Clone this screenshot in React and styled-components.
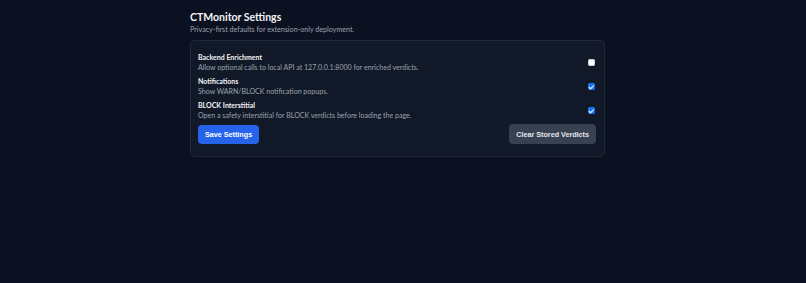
import React from "react";
import styled, { createGlobalStyle } from "styled-components";

const Global = createGlobalStyle`
  html, body { margin: 0; padding: 0; background: #0b1120; }
  body { font-family: Lato, "Open Sans", sans-serif; color: #e5e7eb; }
  * { box-sizing: border-box; }
`;

const Page = styled.div`
  min-height: 283px;
  background: #0b1120;
  padding: 10px 11px 0 0;
  display: flex;
  justify-content: center;
`;

const Wrap = styled.div`
  width: 415px;
`;

const Title = styled.h1`
  margin: 0;
  font-size: 10.5px;
  font-weight: 700;
  line-height: 14px;
  color: #f3f4f6;
`;

const Subtitle = styled.p`
  margin: 1px 0 0;
  font-size: 7.15px;
  line-height: 10px;
  color: #9ca3af;
`;

const Card = styled.div`
  margin-top: 5px;
  background: #111827;
  border: 1px solid #1f2937;
  border-radius: 5px;
  padding: 12px 8px 12px 7px;
  display: flex;
  flex-direction: column;
  gap: 5px;
`;

const Row = styled.label`
  display: flex;
  align-items: center;
  justify-content: space-between;
  gap: 8px;
`;

const Text = styled.div`
  display: flex;
  flex-direction: column;
`;

const Label = styled.span`
  font-size: 7px;
  font-weight: 700;
  line-height: 9.5px;
  color: #f3f4f6;
`;

const Desc = styled.span`
  font-size: 7.05px;
  line-height: 9.5px;
  color: #9ca3af;
`;

const Check = styled.input.attrs({ type: "checkbox" })`
  appearance: none;
  margin: 0 1px 0 0;
  width: 7px;
  height: 7px;
  border-radius: 1.5px;
  background: #ffffff;
  border: 1px solid #d1d5db;
  position: relative;
  flex-shrink: 0;
  &:checked {
    background: #1a73e8;
    border: none;
  }
  &:checked::after {
    content: "";
    position: absolute;
    left: 2.3px;
    top: 0.7px;
    width: 1.6px;
    height: 3.5px;
    border: solid #fff;
    border-width: 0 1.1px 1.1px 0;
    transform: rotate(45deg);
  }
`;

const Actions = styled.div`
  display: flex;
  justify-content: space-between;
  align-items: center;
  margin-top: -1px;
`;

const Button = styled.button`
  font-family: "Liberation Sans", Arial, sans-serif;
  font-size: 7.2px;
  font-weight: 700;
  border: none;
  border-radius: 4px;
  height: ${(p) => (p.$primary ? "19px" : "20px")};
  padding: 0 7px;
  color: ${(p) => (p.$primary ? "#ffffff" : "#e5e7eb")};
  background: ${(p) => (p.$primary ? "#2563eb" : "#374151")};
  cursor: pointer;
`;

const settings = [
  {
    label: "Backend Enrichment",
    desc: "Allow optional calls to local API at 127.0.0.1:8000 for enriched verdicts.",
    checked: false,
  },
  {
    label: "Notifications",
    desc: "Show WARN/BLOCK notification popups.",
    checked: true,
  },
  {
    label: "BLOCK Interstitial",
    desc: "Open a safety interstitial for BLOCK verdicts before loading the page.",
    checked: true,
  },
];

export default function App() {
  return (
    <>
      <Global />
      <Page>
        <Wrap>
          <Title>CTMonitor Settings</Title>
          <Subtitle>Privacy-first defaults for extension-only deployment.</Subtitle>
          <Card>
            {settings.map((s) => (
              <Row key={s.label}>
                <Text>
                  <Label>{s.label}</Label>
                  <Desc>{s.desc}</Desc>
                </Text>
                <Check defaultChecked={s.checked} />
              </Row>
            ))}
            <Actions>
              <Button $primary>Save Settings</Button>
              <Button>Clear Stored Verdicts</Button>
            </Actions>
          </Card>
        </Wrap>
      </Page>
    </>
  );
}
